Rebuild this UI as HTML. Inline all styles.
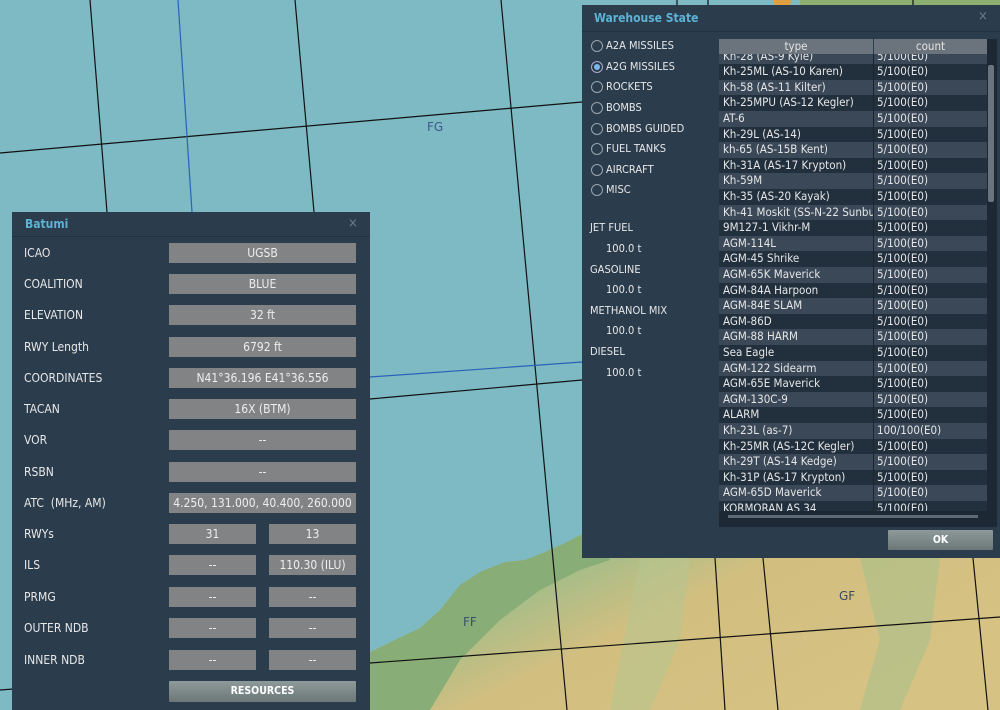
<!DOCTYPE html>
<html><head><meta charset="utf-8"><style>
*{margin:0;padding:0;box-sizing:border-box}
body{width:1000px;height:710px;overflow:hidden;position:relative;background:#7dbac4;font-family:"DejaVu Sans Condensed","Liberation Sans",sans-serif;color:#e6e6e6}
.abs{position:absolute}
.panel{position:absolute;background:#2b3c4d}
.title{position:absolute;font-weight:bold;color:#5cb3d6;font-size:12px}
.x{position:absolute;color:#6d7c8a;font-size:13px}
.lbl{position:absolute;font-size:12px;color:#e8e8e8;line-height:14px}
.fld{position:absolute;height:20px;background:#828384;color:#eee;font-size:12px;text-align:center;line-height:20px;white-space:nowrap;overflow:hidden}
.btn{position:absolute;background:linear-gradient(#8e9a9a,#6c7878);color:#fff;font-weight:bold;font-size:10.5px;text-align:center;border-radius:1px}
.rad{position:absolute;left:9px;width:12px;height:12px;border:1px solid #9aa6b0;border-radius:50%}
.row{position:absolute;left:0;width:268px;height:15.6px;font-size:11.5px;line-height:15.6px;white-space:nowrap}
.row span{position:absolute;top:0;overflow:hidden}
.row .a{left:4px;width:150px}
.row .b{left:158px}
.row::after{content:"";position:absolute;left:154px;top:0;width:1px;height:100%;background:#1a2530}
</style></head><body>
<svg class="abs" style="left:0;top:0" width="1000" height="710">
<defs>
<linearGradient id="lg" x1="0" y1="0" x2="1" y2="0.6">
<stop offset="0" stop-color="#86ac74"/><stop offset="0.35" stop-color="#a8bd88"/><stop offset="0.55" stop-color="#d2bf80"/><stop offset="1" stop-color="#d6c283"/>
</linearGradient>
</defs>
<rect x="800" y="0" width="200" height="6" fill="#8db070"/>
<circle cx="782" cy="0" r="9" fill="#e0a040"/>
<path d="M370 652 L395 640 L420 628 L440 610 L460 585 L480 572 L505 562 L525 560 L545 552 L565 543 L600 525 L1000 525 L1000 710 L370 710 Z" fill="url(#lg)"/>
<path d="M370 652 L395 640 L420 628 L440 610 L460 585 L480 572 L505 562 L525 560 L545 552 L565 543 L600 525 L610 560 L580 570 L540 590 L500 620 L460 660 L430 710 L370 710 Z" fill="#88ad76"/>
<path d="M860 558 L940 558 L930 640 L900 710 L860 710 L880 640 Z" fill="#a8c08a" opacity=".6"/>
<path d="M640 558 L690 558 L680 640 L650 710 L610 710 Z" fill="#b8c490" opacity=".6"/>
<g stroke="#111" stroke-width="1.2" fill="none">
<line x1="90" y1="0" x2="107" y2="212"/>
<line x1="295" y1="0" x2="314" y2="212"/>
<line x1="501" y1="0" x2="567" y2="710"/>
<line x1="0" y1="153" x2="582" y2="102"/>
<line x1="370" y1="399" x2="582" y2="380"/>
<line x1="0" y1="690" x2="1000" y2="617"/>
<line x1="715" y1="558" x2="725" y2="710"/>
<line x1="763" y1="558" x2="778" y2="710"/>
<line x1="973" y1="558" x2="988" y2="710"/>
<line x1="677" y1="0" x2="677" y2="6"/><line x1="708" y1="0" x2="708" y2="6"/><line x1="913" y1="0" x2="913" y2="6"/>
</g>
<g stroke="#2a62b8" stroke-width="1.2"><line x1="178" y1="0" x2="192" y2="212"/><line x1="370" y1="377" x2="582" y2="362"/></g>
<text x="427" y="131" font-family="DejaVu Sans" font-size="12" fill="#3a5a8a">FG</text>
<text x="463" y="626" font-family="DejaVu Sans" font-size="12" fill="#3a5070">FF</text>
<text x="839" y="600" font-family="DejaVu Sans" font-size="12" fill="#3a4a60">GF</text>
</svg>

<div class="panel" style="left:12px;top:212px;width:358px;height:498px">
<div class="title" style="left:13px;top:5px">Batumi</div><div class="x" style="left:336px;top:4px">×</div>
<div class="abs" style="left:0;top:24px;width:358px;height:1px;background:#223140"></div>
</div>
<div id="bat"></div>

<div class="panel" style="left:582px;top:5px;width:418px;height:553px">
<div class="title" style="left:12px;top:6px">Warehouse State</div><div class="x" style="left:396px;top:4px">×</div>
<div class="abs" style="left:0;top:26px;width:418px;height:1px;background:#223140"></div>
<div class="rad" style="top:35px"></div><div class="lbl" style="left:24px;top:34px;font-size:11px">A2A MISSILES</div>
<div class="rad" style="top:56px;border-color:#aac"><div class="abs" style="left:2px;top:2px;width:6px;height:6px;border-radius:50%;background:#7ab8ee"></div></div><div class="lbl" style="left:24px;top:55px;font-size:11px">A2G MISSILES</div>
<div class="rad" style="top:76px"></div><div class="lbl" style="left:24px;top:75px;font-size:11px">ROCKETS</div>
<div class="rad" style="top:97px"></div><div class="lbl" style="left:24px;top:96px;font-size:11px">BOMBS</div>
<div class="rad" style="top:118px"></div><div class="lbl" style="left:24px;top:117px;font-size:11px">BOMBS GUIDED</div>
<div class="rad" style="top:138px"></div><div class="lbl" style="left:24px;top:137px;font-size:11px">FUEL TANKS</div>
<div class="rad" style="top:159px"></div><div class="lbl" style="left:24px;top:158px;font-size:11px">AIRCRAFT</div>
<div class="rad" style="top:179px"></div><div class="lbl" style="left:24px;top:178px;font-size:11px">MISC</div>
<div class="lbl" style="left:8px;top:216px;font-size:11px">JET FUEL</div><div class="lbl" style="left:24px;top:237px;font-size:11px">100.0 t</div>
<div class="lbl" style="left:8px;top:258px;font-size:11px">GASOLINE</div><div class="lbl" style="left:24px;top:278px;font-size:11px">100.0 t</div>
<div class="lbl" style="left:8px;top:299px;font-size:11px">METHANOL MIX</div><div class="lbl" style="left:24px;top:319px;font-size:11px">100.0 t</div>
<div class="lbl" style="left:8px;top:340px;font-size:11px">DIESEL</div><div class="lbl" style="left:24px;top:361px;font-size:11px">100.0 t</div>
<div class="abs" style="left:137px;top:34px;width:278px;height:488px;background:#1c2834"></div>
<div id="tbl" class="abs" style="left:137px;top:49px;width:268px;height:457px;overflow:hidden"></div>
<div class="abs" style="left:137px;top:34px;width:268px;height:15px;background:#6b747d;font-size:11.5px;color:#e4e4e4;line-height:15px">
<span class="abs" style="left:0;width:154px;text-align:center">type</span><span class="abs" style="left:154px;width:1px;height:15px;background:#2b3c4d"></span><span class="abs" style="left:155px;width:113px;text-align:center">count</span></div>
<div class="abs" style="left:406px;top:60px;width:6px;height:137px;background:#6a747e;border-radius:2px"></div>
<div class="abs" style="left:146px;top:510px;width:250px;height:3px;background:#5e6a76"></div>
<div class="btn" style="left:306px;top:525px;width:105px;height:20px;line-height:20px">OK</div>
</div>

<script>
var rows=[["Kh-28 (AS-9 Kyle)","5/100(E0)"],["Kh-25ML (AS-10 Karen)","5/100(E0)"],["Kh-58 (AS-11 Kilter)","5/100(E0)"],["Kh-25MPU (AS-12 Kegler)","5/100(E0)"],["AT-6","5/100(E0)"],["Kh-29L (AS-14)","5/100(E0)"],["kh-65 (AS-15B Kent)","5/100(E0)"],["Kh-31A (AS-17 Krypton)","5/100(E0)"],["Kh-59M","5/100(E0)"],["Kh-35 (AS-20 Kayak)","5/100(E0)"],["Kh-41 Moskit (SS-N-22 Sunburn)","5/100(E0)"],["9M127-1 Vikhr-M","5/100(E0)"],["AGM-114L","5/100(E0)"],["AGM-45 Shrike","5/100(E0)"],["AGM-65K Maverick","5/100(E0)"],["AGM-84A Harpoon","5/100(E0)"],["AGM-84E SLAM","5/100(E0)"],["AGM-86D","5/100(E0)"],["AGM-88 HARM","5/100(E0)"],["Sea Eagle","5/100(E0)"],["AGM-122 Sidearm","5/100(E0)"],["AGM-65E Maverick","5/100(E0)"],["AGM-130C-9","5/100(E0)"],["ALARM","5/100(E0)"],["Kh-23L (as-7)","100/100(E0)"],["Kh-25MR (AS-12C Kegler)","5/100(E0)"],["Kh-29T (AS-14 Kedge)","5/100(E0)"],["Kh-31P (AS-17 Krypton)","5/100(E0)"],["AGM-65D Maverick","5/100(E0)"],["KORMORAN AS 34","5/100(E0)"]];
var h="";rows.forEach(function(r,i){h+='<div class="row" style="top:'+(i*15.6-5.4)+'px;background:'+(i%2?'#22303e':'#3a4858')+'"><span class="a">'+r[0]+'</span><span class="b">'+r[1]+'</span></div>';});
document.getElementById("tbl").innerHTML=h;
var f=[["ICAO","UGSB"],["COALITION","BLUE"],["ELEVATION","32 ft"],["RWY Length","6792 ft"],["COORDINATES","N41°36.196 E41°36.556"],["TACAN","16X (BTM)"],["VOR","--"],["RSBN","--"],["ATC&nbsp; (MHz, AM)","4.250, 131.000, 40.400, 260.000"],["RWYs","31","13"],["ILS","--","110.30 (ILU)"],["PRMG","--","--"],["OUTER NDB","--","--"],["INNER NDB","--","--"]];
var ys=[253,284,315,347,378,409,440,472,503,534,565,597,628,660],b="";
f.forEach(function(r,i){var y=ys[i];b+='<div class="lbl" style="left:24px;top:'+(y-7)+'px">'+r[0]+'</div>';
if(r.length==2)b+='<div class="fld" style="left:169px;top:'+(y-10)+'px;width:187px">'+r[1]+'</div>';
else b+='<div class="fld" style="left:169px;top:'+(y-10)+'px;width:87px">'+r[1]+'</div><div class="fld" style="left:269px;top:'+(y-10)+'px;width:87px">'+r[2]+'</div>';});
b+='<div class="btn" style="left:169px;top:681px;width:187px;height:21px;line-height:21px">RESOURCES</div>';
document.getElementById("bat").innerHTML=b;
</script>
</body></html>
